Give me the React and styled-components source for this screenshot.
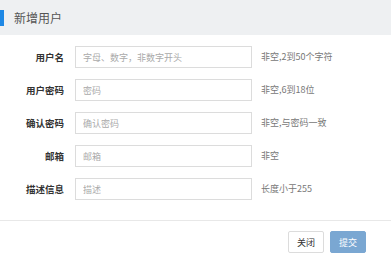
import React from "react";
import styled, { createGlobalStyle } from "styled-components";

const GlobalStyle = createGlobalStyle`
  html, body {
    margin: 0;
    padding: 0;
    background: #fff;
    font-family: "Noto Sans CJK SC", "Liberation Sans", sans-serif;
  }
`;

const fields = [
  { label: "用户名", placeholder: "字母、数字，非数字开头", hint: "非空,2到50个字符" },
  { label: "用户密码", placeholder: "密码", hint: "非空,6到18位" },
  { label: "确认密码", placeholder: "确认密码", hint: "非空,与密码一致" },
  { label: "邮箱", placeholder: "邮箱", hint: "非空" },
  { label: "描述信息", placeholder: "描述", hint: "长度小于255" },
];

const App = () => {
  return (
    <Page>
      <GlobalStyle />
      <Header>
        <Marker />
        <Title>新增用户</Title>
      </Header>
      <Form>
        {fields.map((f) => (
          <Row key={f.label}>
            <Label>{f.label}</Label>
            <Input placeholder={f.placeholder} />
            <Hint>{f.hint}</Hint>
          </Row>
        ))}
      </Form>
      <Footer>
        <Button>关闭</Button>
        <Button $primary>提交</Button>
      </Footer>
    </Page>
  );
};

export default App;

const Page = styled.div`
  width: 391px;
  height: 261px;
  background: #fff;
`;

const Header = styled.div`
  height: 35px;
  background: #eef0f2;
  display: flex;
  align-items: center;
`;

const Marker = styled.div`
  width: 4px;
  height: 16px;
  background: #1e88e5;
`;

const Title = styled.div`
  margin-left: 10px;
  font-size: 12px;
  line-height: 16px;
  color: #555;
`;

const Form = styled.div`
  display: flex;
  flex-direction: column;
  gap: 11px;
  padding-top: 11px;
  height: 186px;
  box-sizing: border-box;
  border-bottom: 1px solid #e8e8e8;
`;

const Row = styled.div`
  display: flex;
  align-items: center;
  height: 22px;
`;

const Label = styled.div`
  width: 64px;
  text-align: right;
  font-size: 9.5px;
  font-weight: bold;
  color: #333;
  line-height: 22px;
`;

const Input = styled.input`
  margin-left: 11px;
  width: 177px;
  height: 22px;
  box-sizing: border-box;
  border: 1px solid #dcdcdc;
  padding: 0 7px;
  font-family: inherit;
  font-size: 9px;
  color: #333;
  outline: none;

  &::placeholder {
    color: #aaa;
  }
`;

const Hint = styled.div`
  margin-left: 9px;
  font-size: 9px;
  color: #777;
  line-height: 22px;
`;

const Footer = styled.div`
  display: flex;
  justify-content: flex-end;
  gap: 6px;
  padding: 10px 25px 0 0;
`;

const Button = styled.button`
  width: 36px;
  height: 22px;
  box-sizing: border-box;
  padding: 0;
  font-family: inherit;
  font-size: 9px;
  border-radius: 2px;
  border: 1px solid ${(p) => (p.$primary ? "#7aa7d2" : "#dcdcdc")};
  background: ${(p) => (p.$primary ? "#7aa7d2" : "#fff")};
  color: ${(p) => (p.$primary ? "#fff" : "#333")};
  cursor: pointer;
`;
